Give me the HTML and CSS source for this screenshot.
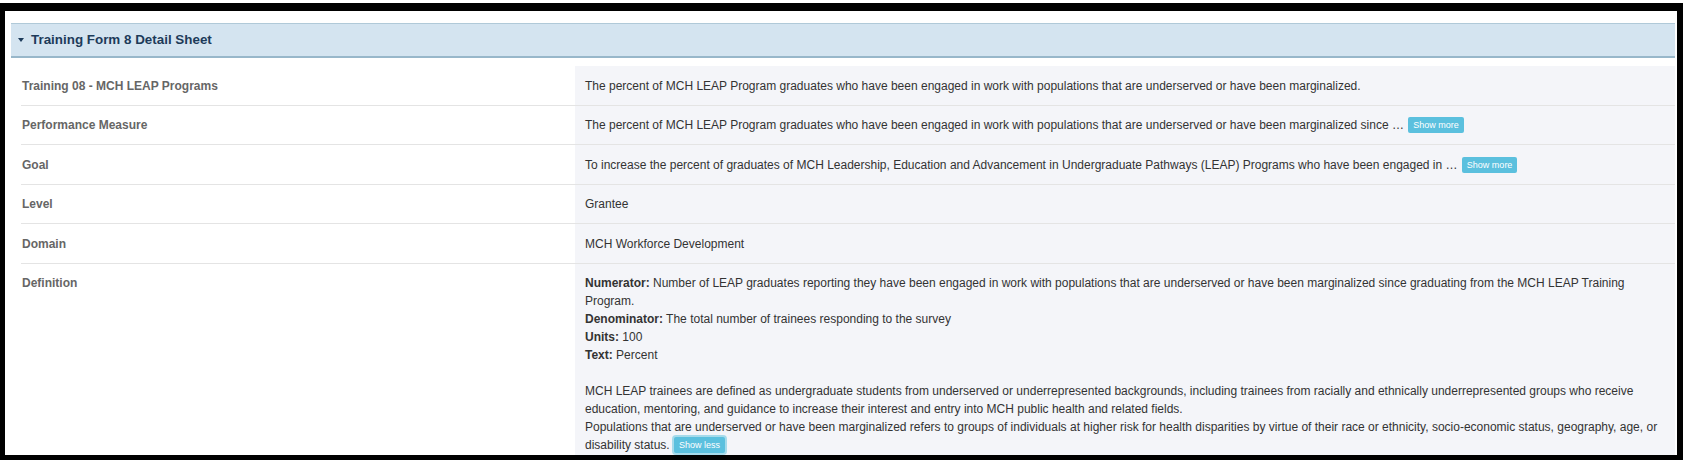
FILE: index.html
```html
<!DOCTYPE html>
<html lang="en">
<head>
    <meta charset="UTF-8">
    <meta name="viewport" content="width=device-width, initial-scale=1.0">
    <title>Training Form 8 Detail Sheet</title>
    <link rel="stylesheet" href="styles.css">
</head>
<body>
    <div class="frame">
        <div class="panel">
            <div class="panel-heading">
                <span class="caret"></span>
                <span class="panel-title">Training Form 8 Detail Sheet</span>
            </div>
            <div class="panel-body">
                <div class="detail-row">
                    <div class="detail-label">Training 08 - MCH LEAP Programs</div>
                    <div class="detail-value">The percent of MCH LEAP Program graduates who have been engaged in work with populations that are underserved or have been marginalized.</div>
                </div>
                <div class="detail-row">
                    <div class="detail-label">Performance Measure</div>
                    <div class="detail-value">The percent of MCH LEAP Program graduates who have been engaged in work with populations that are underserved or have been marginalized since &hellip; <button class="btn-toggle">Show more</button></div>
                </div>
                <div class="detail-row">
                    <div class="detail-label">Goal</div>
                    <div class="detail-value">To increase the percent of graduates of MCH Leadership, Education and Advancement in Undergraduate Pathways (LEAP) Programs who have been engaged in &hellip; <button class="btn-toggle">Show more</button></div>
                </div>
                <div class="detail-row">
                    <div class="detail-label">Level</div>
                    <div class="detail-value">Grantee</div>
                </div>
                <div class="detail-row">
                    <div class="detail-label">Domain</div>
                    <div class="detail-value">MCH Workforce Development</div>
                </div>
                <div class="detail-row">
                    <div class="detail-label">Definition</div>
                    <div class="detail-value"><b>Numerator:</b> Number of LEAP graduates reporting they have been engaged in work with populations that are underserved or have been marginalized since graduating from the MCH LEAP Training Program.<br>
                        <b>Denominator:</b> The total number of trainees responding to the survey<br>
                        <b>Units:</b> 100<br>
                        <b>Text:</b> Percent<br>
                        <br>
                        MCH LEAP trainees are defined as undergraduate students from underserved or underrepresented backgrounds, including trainees from racially and ethnically underrepresented groups who receive education, mentoring, and guidance to increase their interest and entry into MCH public health and related fields.<br>
                        Populations that are underserved or have been marginalized refers to groups of individuals at higher risk for health disparities by virtue of their race or ethnicity, socio-economic status, geography, age, or disability status. <button class="btn-toggle active">Show less</button></div>
                </div>
            </div>
        </div>
    </div>
</body>
</html>
```

FILE: styles.css
```css
body {
    margin: 0;
    background-color: #fff;
    font-family: "Liberation Sans", Arial, sans-serif;
    font-size: 12px;
    line-height: 18px;
    color: #333;
}
.frame {
    margin: 3px 8px 0 0;
    height: 444px;
    overflow: hidden;
    border-style: solid;
    border-color: #000;
    border-width: 8px 6px 5px 5px;
    background-color: #fff;
}
.panel {
    margin: 12px 2px 0 6px;
}
.panel-heading {
    display: flex;
    align-items: center;
    height: 32px;
    padding: 0 7px;
    background-color: #d4e4f0;
    border-top: 1px solid #b0c9d8;
    border-bottom: 2px solid #98b7ca;
}
.caret {
    width: 0;
    height: 0;
    margin-right: 7px;
    border-left: 3.5px solid transparent;
    border-right: 3.5px solid transparent;
    border-top: 4px solid #1d3b5a;
}
.panel-title {
    font-size: 13.4px;
    font-weight: bold;
    color: #1d3b5a;
}
.panel-body {
    padding: 8px 0 0 10px;
}
.detail-row {
    display: grid;
    grid-template-columns: 554px 1fr;
    border-bottom: 1px solid #e4e4e4;
}
.detail-label {
    padding: 10.5px 0 10px 1px;
    font-weight: bold;
    color: #666;
}
.detail-value {
    padding: 10.5px 8px 10px 10px;
    background-color: #f4f5f9;
    color: #333;
}
.btn-toggle {
    display: inline-block;
    vertical-align: top;
    margin: 1px 0 0 1px;
    padding: 2px 5px;
    border: none;
    border-radius: 2px;
    background-color: #5bc0de;
    color: #fff;
    font-family: "Liberation Sans", Arial, sans-serif;
    font-size: 9px;
    line-height: 12px;
    cursor: pointer;
}
.btn-toggle.active {
    box-shadow: 0 0 0 2px #a6dbeb;
}
```
